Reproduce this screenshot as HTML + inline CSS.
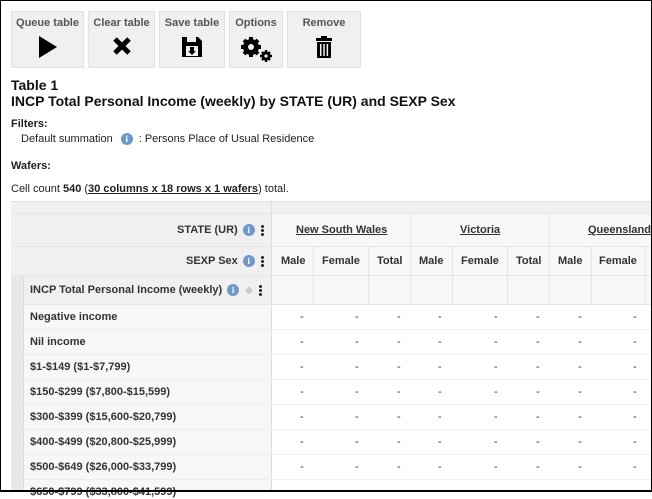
<!DOCTYPE html>
<html><head><meta charset="utf-8"><style>
*{box-sizing:border-box;margin:0;padding:0}
body{width:652px;height:492px;overflow:hidden;background:#fff;font-family:"Liberation Sans",Arial,sans-serif;color:#222;position:relative}
#frame{position:absolute;left:0;top:0;width:652px;height:492px;border:1px solid #000;border-bottom-width:2px;pointer-events:none;z-index:10}
.btn{position:absolute;top:11px;height:57px;background:#f0f0f0;border:1px solid #e2e2e2;text-align:center;font-size:11px;color:#555;font-weight:bold}
.btn .l{position:absolute;top:5px;left:0;right:0}
.btn svg{position:absolute;left:50%;top:24px;transform:translateX(-50%)}
.a{position:absolute;white-space:nowrap}
.h{font-weight:bold;font-size:14px;color:#111}
.s{font-size:11px}
.info{display:inline-block;width:12px;height:12px;border-radius:50%;background:#6f97c8;color:#fff;font-size:9px;font-weight:bold;text-align:center;line-height:12px;font-family:"Liberation Serif",serif}
.dots{display:inline-block;width:3px}
.dots i{display:block;width:3px;height:3px;background:#222;border-radius:50%;margin:1px 0}
.c{position:absolute;font-size:11px;color:#333;font-weight:bold;display:flex;align-items:center;white-space:nowrap;height:14px}
.c .info{margin:0 6px 0 5px}
.line{position:absolute;background:#e6e6e6}
</style></head><body>
<div id="frame"></div>
<div class="btn" style="left:11px;width:73px"><div class="l">Queue table</div><svg width="20" height="22" viewBox="0 0 20 22"><path d="M1 0L19 11L1 22Z" fill="#000"/></svg></div>
<div class="btn" style="left:88px;width:67px"><div class="l">Clear table</div><svg width="20" height="20" viewBox="0 0 20 20"><path d="M3 3L17 17M17 3L3 17" stroke="#000" stroke-width="5"/></svg></div>
<div class="btn" style="left:159px;width:66px"><div class="l">Save table</div><svg width="22" height="22" viewBox="0 0 22 22"><path d="M1 1H17L21 5V21H1Z" fill="#000"/><rect x="6" y="1" width="9" height="5" fill="#f0f0f0"/><rect x="5" y="10" width="12" height="10" fill="#f0f0f0"/><path d="M9 11H13V15H15L11 19L7 15H9Z" fill="#000"/></svg></div>
<div class="btn" style="left:229px;width:54px"><div class="l">Options</div><svg width="34" height="26" viewBox="0 0 34 26"><g fill="#000"><circle cx="12" cy="11" r="8"/><g stroke="#000" stroke-width="4"><path d="M12 1V21M2 11H22M5 4L19 18M19 4L5 18"/></g><circle cx="12" cy="11" r="3" fill="#f0f0f0"/><circle cx="27" cy="20" r="4.5"/><g stroke="#000" stroke-width="2.4"><path d="M27 14V26M21 20H33M23 16L31 24M31 16L23 24"/></g><circle cx="27" cy="20" r="1.6" fill="#f0f0f0"/></g></svg></div>
<div class="btn" style="left:287px;width:74px"><div class="l">Remove</div><svg width="16" height="22" viewBox="0 0 16 22"><rect x="0" y="2" width="16" height="3" fill="#000"/><rect x="5" y="0" width="6" height="3" fill="#000"/><rect x="1" y="6" width="14" height="16" fill="#000"/><g fill="#f0f0f0"><rect x="4" y="8" width="1.5" height="12"/><rect x="7.3" y="8" width="1.5" height="12"/><rect x="10.6" y="8" width="1.5" height="12"/></g></svg></div>

<div class="a h" style="left:11px;top:77px">Table 1</div>
<div class="a h" style="left:11px;top:93px">INCP Total Personal Income (weekly) by STATE (UR) and SEXP Sex</div>
<div class="a s" style="left:11px;top:118px;font-weight:bold">Filters:</div>
<div class="a s" style="left:21px;top:133px;display:flex;align-items:center">Default summation <span class="info" style="margin:0 6px 0 8px">i</span> : Persons Place of Usual Residence</div>
<div class="a s" style="left:11px;top:160px;font-weight:bold">Wafers:</div>
<div class="a s" style="left:11px;top:183px">Cell count <b>540</b> (<b style="text-decoration:underline">30 columns x 18 rows x 1 wafers</b>) total.</div>

<div style="position:absolute;left:11px;top:201px;width:641px;height:12px;background:#f0f0f0;border-top:1px solid #e2e2e2"></div>
<div style="position:absolute;left:11px;top:213px;width:261px;height:91px;background:#f0f0f0"></div>
<div style="position:absolute;left:272px;top:213px;width:380px;height:91px;background:#f7f7f7"></div>
<div style="position:absolute;left:11px;top:275px;width:12px;height:217px;background:#e8e8e8"></div>
<div style="position:absolute;left:23px;top:304px;width:249px;height:188px;background:#f7f7f7"></div>
<div style="position:absolute;left:272px;top:304px;width:380px;height:188px;background:#fff"></div>
<div class="line" style="left:23px;top:275px;width:1px;height:217px;background:#ddd"></div>
<div class="line" style="left:271px;top:201px;width:1px;height:291px;background:#ddd"></div>
<div class="line" style="left:11px;top:213px;width:641px;height:1px"></div>
<div class="line" style="left:11px;top:246px;width:641px;height:1px"></div>
<div class="line" style="left:11px;top:275px;width:641px;height:1px"></div>
<div class="line" style="left:23px;top:304px;width:629px;height:1px"></div>
<div class="line" style="left:23px;top:329px;width:629px;height:1px;background:#eee"></div>
<div class="line" style="left:23px;top:354px;width:629px;height:1px;background:#eee"></div>
<div class="line" style="left:23px;top:379px;width:629px;height:1px;background:#eee"></div>
<div class="line" style="left:23px;top:404px;width:629px;height:1px;background:#eee"></div>
<div class="line" style="left:23px;top:429px;width:629px;height:1px;background:#eee"></div>
<div class="line" style="left:23px;top:454px;width:629px;height:1px;background:#eee"></div>
<div class="line" style="left:23px;top:479px;width:629px;height:1px;background:#eee"></div>
<div class="line" style="left:410px;top:213px;width:1px;height:91px"></div>
<div class="line" style="left:549px;top:213px;width:1px;height:91px"></div>
<div class="line" style="left:313px;top:246px;width:1px;height:58px"></div>
<div class="line" style="left:368px;top:246px;width:1px;height:58px"></div>
<div class="line" style="left:452px;top:246px;width:1px;height:58px"></div>
<div class="line" style="left:507px;top:246px;width:1px;height:58px"></div>
<div class="line" style="left:591px;top:246px;width:1px;height:58px"></div>
<div class="line" style="left:645px;top:246px;width:1px;height:58px"></div>

<div class="c" style="left:177px;top:223px">STATE (UR)<span class="info">i</span><span class="dots"><i></i><i></i><i></i></span></div>
<div class="c" style="left:186px;top:254px">SEXP Sex<span class="info">i</span><span class="dots"><i></i><i></i><i></i></span></div>
<div class="c" style="left:30px;top:283px">INCP Total Personal Income (weekly)<span class="info">i</span><span style="color:#ccc;font-size:10px;margin-right:6px">&#9670;</span><span class="dots"><i></i><i></i><i></i></span></div>

<div class="c" style="left:296px;top:223px;text-decoration:underline">New South Wales</div>
<div class="c" style="left:460px;top:223px;text-decoration:underline">Victoria</div>
<div class="c" style="left:588px;top:223px;text-decoration:underline">Queensland</div>
<div class="c" style="left:281px;top:254px">Male</div>
<div class="c" style="left:322px;top:254px">Female</div>
<div class="c" style="left:377px;top:254px">Total</div>
<div class="c" style="left:419px;top:254px">Male</div>
<div class="c" style="left:461px;top:254px">Female</div>
<div class="c" style="left:516px;top:254px">Total</div>
<div class="c" style="left:558px;top:254px">Male</div>
<div class="c" style="left:599px;top:254px">Female</div>

<div class="c" style="left:30px;top:310px">Negative income</div>
<div class="c" style="left:30px;top:335px">Nil income</div>
<div class="c" style="left:30px;top:360px">$1-$149 ($1-$7,799)</div>
<div class="c" style="left:30px;top:385px">$150-$299 ($7,800-$15,599)</div>
<div class="c" style="left:30px;top:410px">$300-$399 ($15,600-$20,799)</div>
<div class="c" style="left:30px;top:435px">$400-$499 ($20,800-$25,999)</div>
<div class="c" style="left:30px;top:460px">$500-$649 ($26,000-$33,799)</div>
<div class="c" style="left:30px;top:485px">$650-$799 ($33,800-$41,599)</div>

<div id="dashes"></div>
<script>
var xs=[300,355,397,438,494,536,578,633],ys=[310,335,360,385,410,435,460],h='';
ys.forEach(function(y){xs.forEach(function(x){h+='<div class="c" style="left:'+x+'px;top:'+y+'px;font-weight:normal">-</div>'})});
document.getElementById('dashes').innerHTML=h;
</script>
</body></html>
